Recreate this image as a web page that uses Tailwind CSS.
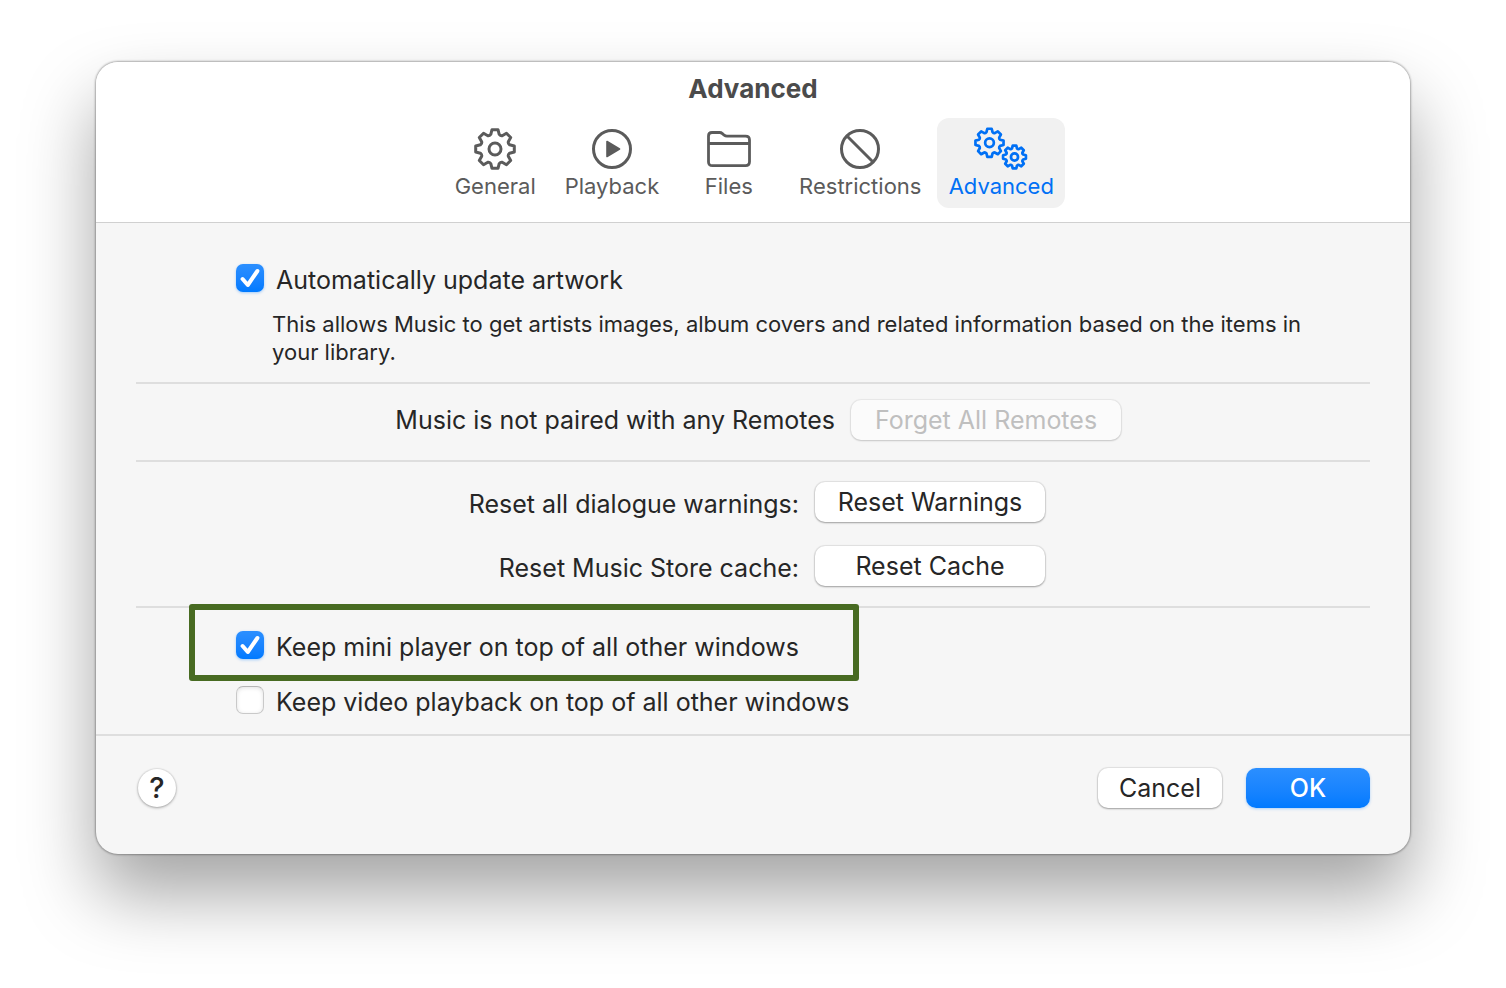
<!DOCTYPE html>
<html lang="en">

<head>
  <meta charset="UTF-8" />
  <meta name="viewport" content="width=device-width, initial-scale=1.0" />
  <title>Advanced</title>
  <script src="https://cdn.jsdelivr.net/npm/@tailwindcss/browser@4"></script>
</head>

<body class="bg-white min-h-screen px-24 pt-[62px] pb-24 font-['Inter',sans-serif] text-[25px] leading-9 text-[#262626]">

  <!-- Shared gear outline -->
  <svg class="hidden">
    <symbol id="gear" viewBox="-22 -22 44 44" overflow="visible">
      <path vector-effect="non-scaling-stroke" d="M-3-19.3H3L4.2-14.6Q5.6-12.9 7.2-13.3L11.45-15.7L15.7-11.45L13.3-7.2Q12.9-5.6 14.6-4.2L19.3-3V3L14.6 4.2Q12.9 5.6 13.3 7.2L15.7 11.45L11.45 15.7L7.2 13.3Q5.6 12.9 4.2 14.6L3 19.3H-3L-4.2 14.6Q-5.6 12.9-7.2 13.3L-11.45 15.7L-15.7 11.45L-13.3 7.2Q-12.9 5.6-14.6 4.2L-19.3 3V-3L-14.6-4.2Q-12.9-5.6-13.3-7.2L-15.7-11.45L-11.45-15.7L-7.2-13.3Q-5.6-12.9-4.2-14.6Z" />
      <circle vector-effect="non-scaling-stroke" r="6" />
    </symbol>
  </svg>

  <div class="rounded-[22px] overflow-hidden bg-[#f6f6f6] shadow-[0_0_2px_1px_rgba(0,0,0,0.3),0_40px_72px_rgba(0,0,0,0.36)]">

    <!-- Title and toolbar -->
    <header class="bg-white border-b border-[#d0d0d0] pt-[9px] pb-[14px]">
      <h1 class="text-center text-[26px] leading-9 font-bold text-[#4b4b4b]">Advanced</h1>
      <nav class="mt-[11px] flex justify-center gap-[3px] text-[22px] leading-7 text-[#5b5b5b]">
        <button class="min-w-[109px] h-[90px] px-3 pt-2 flex flex-col items-center rounded-xl">
          <svg class="w-[44px] h-[46px]" viewBox="-22 -23 44 46" fill="none" stroke="currentColor" stroke-width="3" stroke-linejoin="round">
            <use href="#gear" x="-22" y="-22" width="44" height="44" />
          </svg>
          General
        </button>
        <button class="min-w-[109px] h-[90px] px-3 pt-2 flex flex-col items-center rounded-xl">
          <svg class="w-[44px] h-[46px]" viewBox="0 0 44 46" fill="none" stroke="currentColor" stroke-width="3">
            <circle cx="22" cy="23" r="18.5" />
            <path d="M17 15.5L29.5 23L17 30.5Z" fill="currentColor" stroke-width="1.6" stroke-linejoin="round" />
          </svg>
          Playback
        </button>
        <button class="min-w-[109px] h-[90px] px-3 pt-2 flex flex-col items-center rounded-xl">
          <svg class="w-[46px] h-[46px]" viewBox="0 0 46 46" fill="none" stroke="currentColor" stroke-width="2.8" stroke-linejoin="round">
            <path d="M2.5 36V10Q2.5 6.5 6 6.5H13.5Q15.2 6.5 16.4 7.6L18.2 9.2Q19.4 10.2 21 10.2H39.5Q43.5 10.2 43.5 14V35.8Q43.5 39.6 39.5 39.6H6.5Q2.5 39.6 2.5 36Z" />
            <path d="M2.5 17.5H43.5" />
          </svg>
          Files
        </button>
        <button class="min-w-[148px] h-[90px] px-3 pt-2 flex flex-col items-center rounded-xl">
          <svg class="w-[44px] h-[46px]" viewBox="0 0 44 46" fill="none" stroke="currentColor" stroke-width="3">
            <circle cx="22" cy="23" r="18.5" />
            <path d="M9 10L35 36" />
          </svg>
          Restrictions
        </button>
        <button class="w-[128px] h-[90px] px-2 pt-2 flex flex-col items-center rounded-xl bg-[#f1f1f1] text-[#0070f5]" aria-current="page">
          <svg class="w-[56px] h-[46px]" viewBox="0 0 56 46" fill="none" stroke="currentColor" stroke-width="2.7" stroke-linejoin="round">
            <use href="#gear" x="0.5" y="0.8" width="32" height="32" />
            <use href="#gear" x="28.5" y="18" width="26" height="26" />
          </svg>
          Advanced
        </button>
      </nav>
    </header>

    <main class="px-10">
      <!-- Artwork -->
      <section class="pt-[37px] pb-4 pl-[100px] border-b-2 border-[#dedede]">
        <div class="flex items-center gap-3 h-9">
          <span class="relative size-7">
            <input id="artwork" type="checkbox" checked class="peer appearance-none block size-7 rounded-[7px] bg-white border border-[#c9c9c9] border-t-[#b5b5b5] shadow-[inset_0_1px_4px_rgba(0,0,0,0.12)] checked:border-0 checked:bg-linear-to-b checked:from-[#2b8fff] checked:to-[#007aff] checked:shadow-[0_1px_3px_rgba(0,122,255,0.35)]" />
            <svg class="hidden peer-checked:block absolute inset-0 pointer-events-none" viewBox="0 0 28 28" fill="none" stroke="white" stroke-width="4" stroke-linecap="round" stroke-linejoin="round">
              <path d="M6.6 15L11.8 21L21.4 7" />
            </svg>
          </span>
          <label for="artwork" class="pt-1">Automatically update artwork</label>
        </div>
        <p class="mt-[14px] ml-9 pr-10 text-[22px] leading-7">This allows Music to get artists images, album covers and related information based on the items in your library.</p>
      </section>

      <!-- Remotes -->
      <section class="pt-4 pb-5 flex justify-center items-center gap-4 border-b-2 border-[#dedede]">
        <span class="w-[450px] text-right">Music is not paired with any Remotes</span>
        <button disabled class="h-10 w-[270px] rounded-[10px] bg-[#fbfbfb] text-[#bfbfbf] shadow-[0_0_1px_1px_rgba(0,0,0,0.06),0_1px_2px_rgba(0,0,0,0.15)]">Forget All Remotes</button>
      </section>

      <!-- Resets -->
      <section class="py-5 grid grid-cols-[338px_230px] justify-center items-center gap-x-4 gap-y-6 border-b-2 border-[#dedede]">
        <span class="pt-1 text-right">Reset all dialogue warnings:</span>
        <button class="h-10 rounded-[10px] bg-white shadow-[0_0_1px_1px_rgba(0,0,0,0.08),0_1px_2px_rgba(0,0,0,0.3)]">Reset Warnings</button>
        <span class="pt-1 text-right">Reset Music Store cache:</span>
        <button class="h-10 rounded-[10px] bg-white shadow-[0_0_1px_1px_rgba(0,0,0,0.08),0_1px_2px_rgba(0,0,0,0.3)]">Reset Cache</button>
      </section>

      <!-- Window stacking -->
      <section class="pt-[19px] pb-4 pl-[100px]">
        <div class="relative w-fit flex items-center gap-3 h-9">
          <span class="relative size-7">
            <input id="mini" type="checkbox" checked class="peer appearance-none block size-7 rounded-[7px] bg-white border border-[#c9c9c9] border-t-[#b5b5b5] shadow-[inset_0_1px_4px_rgba(0,0,0,0.12)] checked:border-0 checked:bg-linear-to-b checked:from-[#2b8fff] checked:to-[#007aff] checked:shadow-[0_1px_3px_rgba(0,122,255,0.35)]" />
            <svg class="hidden peer-checked:block absolute inset-0 pointer-events-none" viewBox="0 0 28 28" fill="none" stroke="white" stroke-width="4" stroke-linecap="round" stroke-linejoin="round">
              <path d="M6.6 15L11.8 21L21.4 7" />
            </svg>
          </span>
          <label for="mini" class="pt-1">Keep mini player on top of all other windows</label>
          <!-- Highlight frame -->
          <div class="absolute -top-[23px] -bottom-[18px] -left-[47px] -right-[60px] border-6 border-[#486b22] rounded-[3px] pointer-events-none"></div>
        </div>
        <div class="mt-[19px] flex items-center gap-3 h-9">
          <span class="relative size-7">
            <input id="video" type="checkbox" class="peer appearance-none block size-7 rounded-[7px] bg-white border border-[#c9c9c9] border-t-[#b5b5b5] shadow-[inset_0_1px_4px_rgba(0,0,0,0.12)]" />
          </span>
          <label for="video" class="pt-1">Keep video playback on top of all other windows</label>
        </div>
      </section>
    </main>

    <footer class="px-10 pt-8 pb-[46px] flex items-center border-t-2 border-[#dedede]">
      <button class="ml-0.5 size-[38px] rounded-full bg-white text-[29px] leading-[38px] font-medium shadow-[0_0_1px_1px_rgba(0,0,0,0.06),0_1px_3px_rgba(0,0,0,0.3)]" aria-label="Help">?</button>
      <button class="ml-auto h-10 w-[124px] rounded-[10px] bg-white shadow-[0_0_1px_1px_rgba(0,0,0,0.08),0_1px_2px_rgba(0,0,0,0.3)]">Cancel</button>
      <button class="ml-6 h-10 w-[124px] rounded-[10px] bg-linear-to-b from-[#2b8fff] to-[#007aff] text-white font-medium shadow-[0_1px_3px_rgba(0,122,255,0.3)]">OK</button>
    </footer>
  </div>
</body>

</html>
